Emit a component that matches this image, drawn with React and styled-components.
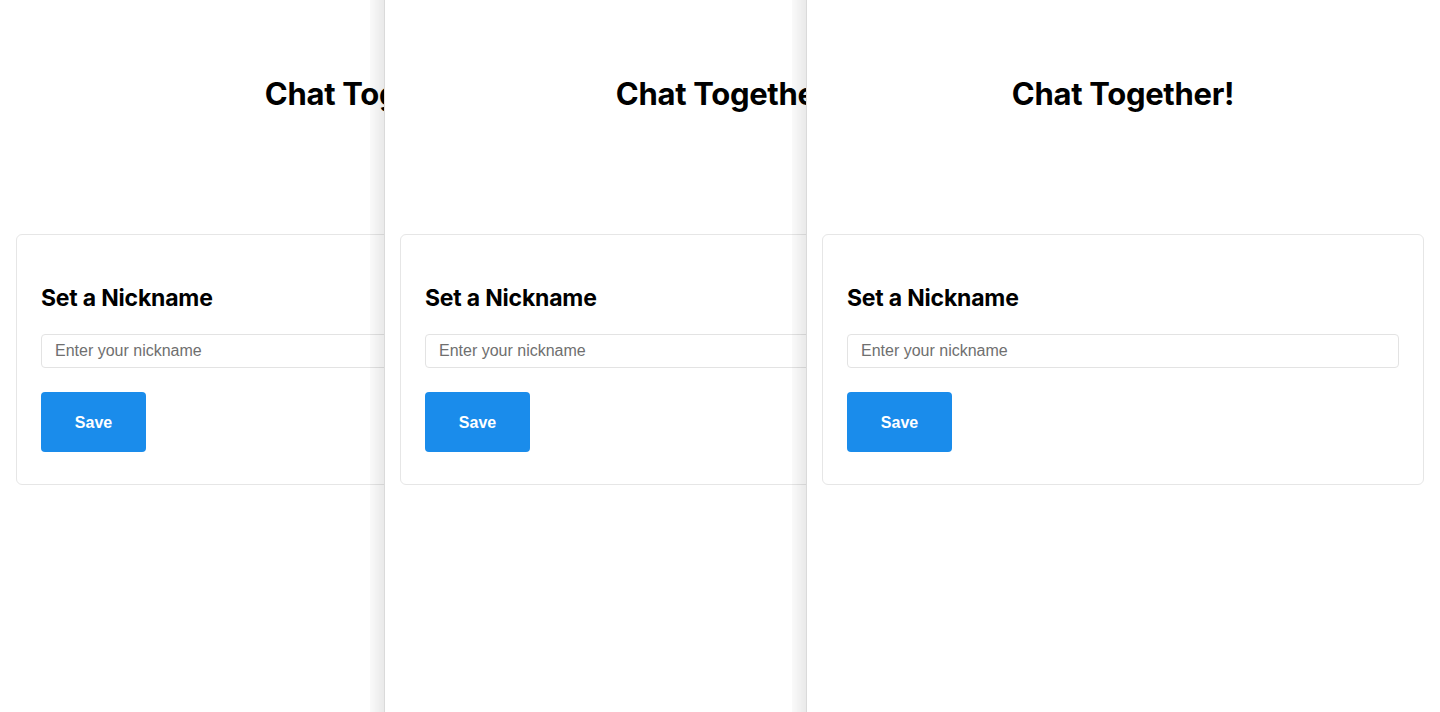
import React from 'react';
import styled, { createGlobalStyle } from 'styled-components';

const GlobalStyle = createGlobalStyle`
  html, body {
    margin: 0;
    padding: 0;
    background: #fff;
    overflow: hidden;
  }
  * {
    box-sizing: border-box;
  }
`;

const Stack = styled.div`
  display: flex;
  flex-direction: row;
  height: 100vh;
  width: 100vw;
`;

const Pane = styled.section`
  background-color: #fff;
  flex: none;
  height: 100%;
  position: relative;
  width: ${p => p.$visible}px;
  z-index: ${p => p.$layer};

  &::before {
    background: linear-gradient(to right, rgba(0, 0, 0, 0.02), rgba(0, 0, 0, 0.085));
    border-right: 1px solid rgba(0, 0, 0, 0.12);
    content: '';
    display: ${p => (p.$layer > 1 ? 'block' : 'none')};
    height: 100%;
    left: -14px;
    position: absolute;
    top: 0;
    width: 14px;
  }
`;

const Clip = styled.div`
  height: 100%;
  overflow: hidden;
  width: 100%;
`;

const Content = styled.div`
  padding: 0 16px;
  width: ${p => p.$width}px;
`;

const Title = styled.h1`
  color: #000;
  font-family: Inter, 'Noto Sans', sans-serif;
  font-size: 31px;
  font-weight: 700;
  letter-spacing: -0.3px;
  line-height: 38px;
  margin: 0;
  padding-top: 75px;
  text-align: center;
`;

const Card = styled.div`
  background-color: #fff;
  border: 1px solid #e6e6e6;
  border-radius: 6px;
  display: flex;
  flex-direction: column;
  margin-top: 121px;
  padding: 24px 24px 32px;
`;

const CardTitle = styled.h2`
  color: #000;
  font-family: Inter, 'Noto Sans', sans-serif;
  font-size: 23px;
  font-weight: 700;
  letter-spacing: -0.2px;
  line-height: 29px;
  margin: 25px 0 21px;
`;

const Input = styled.input`
  border: 1px solid #e3e3e3;
  border-radius: 4px;
  color: #222;
  font-family: 'Liberation Sans', Arial, sans-serif;
  font-size: 16px;
  height: 34px;
  outline: none;
  padding: 0 13px;
  width: 100%;

  &::placeholder {
    color: #6f6f6f;
  }
`;

const SaveButton = styled.button`
  align-self: flex-start;
  background-color: #1a8ceb;
  border: none;
  border-radius: 4px;
  color: #fff;
  cursor: pointer;
  font-family: 'Liberation Sans', Arial, sans-serif;
  font-size: 16px;
  font-weight: 700;
  height: 60px;
  margin-top: 24px;
  padding-top: 2px;
  width: 105px;
`;

const panes = [
  { visible: 384, width: 752 },
  { visible: 422, width: 686 },
  { visible: 634, width: 634 },
];

export default function App() {
  return (
    <>
      <GlobalStyle />
      <Stack>
        {panes.map((pane, i) => (
          <Pane key={i} $visible={pane.visible} $layer={i + 1}>
            <Clip>
              <Content $width={pane.width}>
                <Title>Chat Together!</Title>
                <Card>
                  <CardTitle>Set a Nickname</CardTitle>
                  <Input placeholder="Enter your nickname" />
                  <SaveButton>Save</SaveButton>
                </Card>
              </Content>
            </Clip>
          </Pane>
        ))}
      </Stack>
    </>
  );
}
